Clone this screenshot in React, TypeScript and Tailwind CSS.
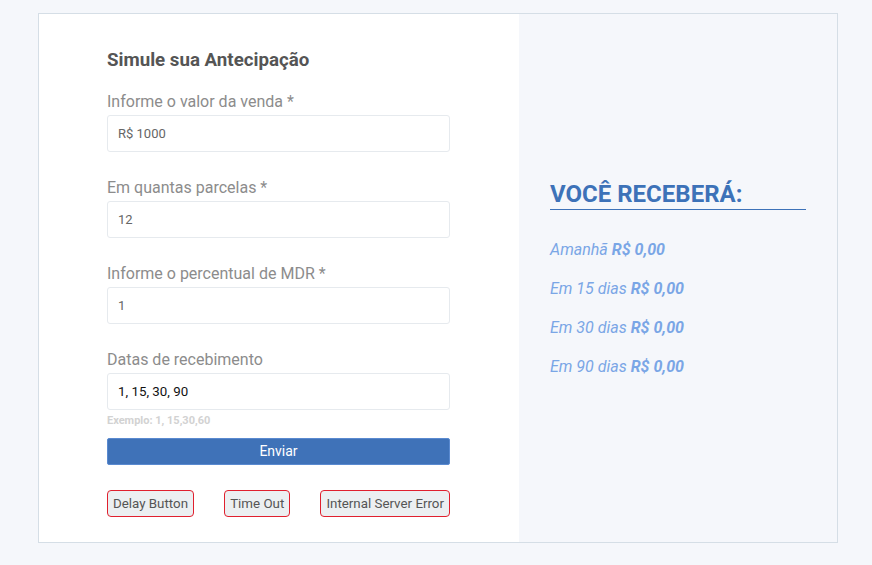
export default function App() {
  const results = [
    { label: "Amanhã", value: "R$ 0,00" },
    { label: "Em 15 dias", value: "R$ 0,00" },
    { label: "Em 30 dias", value: "R$ 0,00" },
    { label: "Em 90 dias", value: "R$ 0,00" },
  ];

  return (
    <div
      className="min-h-[565px] w-full bg-[#f5f7fb] pt-[13px]"
      style={{ fontFamily: "Roboto, 'Liberation Sans', sans-serif" }}
    >
      <div className="ml-[38px] flex h-[530px] w-[800px] border border-[#d5dee6]">
        {/* form */}
        <div className="w-[480px] bg-white pl-[68px] pt-[33px]">
          <h2 className="text-[18.72px] font-bold leading-[27px] text-[#555]">
            Simule sua Antecipação
          </h2>
          <div className="mt-[16px] w-[343px]">
            <Field label="Informe o valor da venda *" value="R$ 1000" />
            <Field label="Em quantas parcelas *" value="12" />
            <Field label="Informe o percentual de MDR *" value="1" />
            <Field label="Datas de recebimento" value="1, 15, 30, 90" dark last />
            <p className="mt-[4px] text-[11px] font-bold leading-[14px] text-[#d2d2d2]">
              Exemplo: 1, 15,30,60
            </p>
            <button className="mt-[10px] h-[27px] w-full rounded-[2px] border border-[#5a8ad0] bg-[#3f72b8] text-[14px] text-white">
              Enviar
            </button>
            <div className="mt-[25px] flex justify-between">
              <SmallButton>Delay Button</SmallButton>
              <SmallButton>Time Out</SmallButton>
              <SmallButton>Internal Server Error</SmallButton>
            </div>
          </div>
        </div>
        {/* results */}
        <div className="flex-1 bg-[#f5f7fb] px-[31px] pt-[166px]">
          <h3 className="border-b border-[#3d72b8] pb-[1px] text-[24px] font-bold leading-[28px] text-[#3d72b8]">
            VOCÊ RECEBERÁ:
          </h3>
          <div className="mt-[28px] flex flex-col gap-[15px]">
            {results.map((r) => (
              <p key={r.label} className="text-[16px] italic leading-[24px] text-[#7aa6e6]">
                {r.label} <span className="font-bold">{r.value}</span>
              </p>
            ))}
          </div>
        </div>
      </div>
    </div>
  );
}

function Field({
  label,
  value,
  dark,
  last,
}: {
  label: string;
  value: string;
  dark?: boolean;
  last?: boolean;
}) {
  return (
    <div className={last ? "" : "mb-[24px]"}>
      <label className="block text-[16px] leading-[24px] text-[#8c8c8c]">{label}</label>
      <div
        className={
          "mt-[1px] flex h-[37px] items-center rounded-[3px] border border-[#e6eaee] pl-[10px] " +
          (dark ? "text-[13.33px] text-[#111]" : "text-[13px] text-[#666]")
        }
      >
        {value}
      </div>
    </div>
  );
}

function SmallButton({ children }: { children: React.ReactNode }) {
  return (
    <button className="h-[27px] rounded-[4px] border border-[#e0202e] bg-[#eceff1] px-[5px] text-[13.33px] text-[#555]">
      {children}
    </button>
  );
}
